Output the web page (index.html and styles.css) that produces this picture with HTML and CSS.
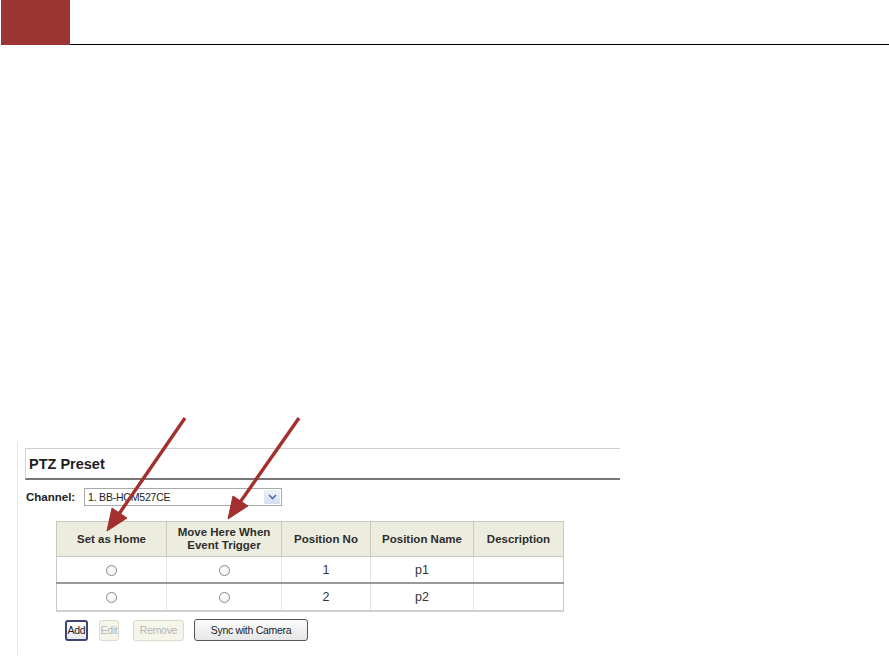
FILE: index.html
```html
<!DOCTYPE html>
<html>
<head>
<meta charset="utf-8">
<link rel="stylesheet" href="styles.css">
</head>
<body>
<div class="page">
  <div class="header">
    <div class="redbox"></div>
    <div class="rule"></div>
  </div>

  <div class="figure">
    <div class="heading">PTZ Preset</div>
    <div class="channel-row">
      <span class="channel-label">Channel:</span>
      <div class="select">
        <span class="select-text">1. BB-HCM527CE</span>
        <span class="select-btn">
          <svg width="9" height="6" viewBox="0 0 9 6"><path d="M1 1 L4.5 4.5 L8 1" fill="none" stroke="#4a6db0" stroke-width="1.6"/></svg>
        </span>
      </div>
    </div>
    <table class="presets">
      <thead>
        <tr>
          <th class="c1">Set as Home</th>
          <th class="c2">Move Here When<br>Event Trigger</th>
          <th class="c3">Position No</th>
          <th class="c4">Position Name</th>
          <th class="c5">Description</th>
        </tr>
      </thead>
      <tbody>
        <tr class="r1">
          <td><span class="radio"></span></td>
          <td><span class="radio"></span></td>
          <td>1</td>
          <td>p1</td>
          <td></td>
        </tr>
        <tr class="r2">
          <td><span class="radio"></span></td>
          <td><span class="radio"></span></td>
          <td>2</td>
          <td>p2</td>
          <td></td>
        </tr>
      </tbody>
    </table>
    <div class="buttons">
      <span class="btn btn-add">Add</span>
      <span class="btn btn-disabled btn-edit">Edit</span>
      <span class="btn btn-disabled btn-remove">Remove</span>
      <span class="btn btn-sync">Sync with Camera</span>
    </div>
  </div>

  <svg class="arrows" width="889" height="670" viewBox="0 0 889 670">
    <g fill="#a3302e" stroke="#a3302e">
      <line x1="185" y1="418" x2="119.3" y2="513.5" stroke-width="3.4"/>
      <polygon points="107,531 127,518 112,508" stroke-width="1"/>
      <line x1="299" y1="418" x2="240.5" y2="501.6" stroke-width="3.4"/>
      <polygon points="228,519 248,506 233,496" stroke-width="1"/>
    </g>
  </svg>
</div>
</body>
</html>
```

FILE: styles.css
```css
html, body {
  margin: 0;
  padding: 0;
  background: #ffffff;
}

.page {
  position: relative;
  width: 889px;
  height: 670px;
  overflow: hidden;
  font-family: "Liberation Sans", Arial, sans-serif;
}

.header {
  display: flex;
  align-items: flex-end;
  height: 45px;
}

.redbox {
  width: 69px;
  height: 45px;
  margin-left: 1px;
  background: #9b3534;
}

.rule {
  flex: 1;
  height: 0;
  border-bottom: 1.5px solid #000;
  margin-bottom: 0.5px;
}

.figure {
  margin-top: 397px;
  margin-left: 17px;
  border-left: 1px solid #e6e6e6;
  padding-top: 6px;
  padding-left: 7px;
  height: 207px;
}

.heading {
  width: 591px;
  height: 29px;
  border-top: 1px solid #cfcfcf;
  border-left: 1px solid #d4d4d4;
  border-bottom: 2px solid #777;
  padding-left: 3px;
  box-sizing: content-box;
  font-weight: bold;
  font-size: 14.5px;
  line-height: 30px;
  color: #1e1e1e;
}

.channel-row {
  display: flex;
  align-items: center;
  margin-top: 8px;
  height: 18px;
  padding-left: 1px;
}

.channel-label {
  font-weight: bold;
  font-size: 11.5px;
  color: #222;
  width: 58px;
}

.select {
  display: flex;
  align-items: center;
  width: 196px;
  height: 16px;
  border: 1px solid #a9a9a9;
  background: #fff;
}

.select-text {
  flex: 1;
  font-size: 10.5px;
  color: #222;
  padding-left: 3px;
  letter-spacing: -0.2px;
}

.select-btn {
  display: flex;
  align-items: center;
  justify-content: center;
  width: 15px;
  height: 14px;
  margin-right: 1px;
  background: linear-gradient(#eef2fa, #d6dff0);
  border-left: 1px solid #e0e6f2;
}

.presets {
  margin-top: 15px;
  margin-left: 31px;
  border-collapse: collapse;
  width: 508px;
  font-size: 12.5px;
  color: #222;
}

.presets th {
  background: #ecedde;
  border: 1px solid #c9c9bd;
  height: 34px;
  padding: 0;
  font-size: 11.5px;
  font-weight: bold;
  line-height: 13px;
  color: #2e2e2e;
  text-align: center;
}

.presets .c1 { width: 109px; }
.presets .c2 { width: 114px; }
.presets .c3 { width: 88px; }
.presets .c4 { width: 102px; }

.presets td {
  border-left: 1px solid #e2e2e2;
  border-right: 1px solid #e2e2e2;
  text-align: center;
  padding: 0;
  color: #333;
}

.presets .r1 td {
  height: 25px;
  border-bottom: 2px solid #9a9a9a;
}

.presets .r2 td {
  height: 26px;
  border-bottom: 2px solid #d0d0d0;
}

.presets td:first-child { border-left: 1px solid #c9c9c9; }
.presets td:last-child { border-right: 1px solid #c9c9c9; }

.radio {
  display: inline-block;
  width: 9px;
  height: 9px;
  border: 1px solid #8a8a8a;
  border-radius: 50%;
  background: radial-gradient(circle at 40% 40%, #fff, #eee);
  vertical-align: middle;
}

.buttons {
  display: flex;
  align-items: center;
  gap: 11px;
  margin-top: 7px;
  margin-left: 40px;
}

.btn {
  display: flex;
  align-items: center;
  justify-content: center;
  box-sizing: border-box;
  height: 21px;
  font-size: 10.5px;
  letter-spacing: -0.3px;
  border-radius: 3px;
}

.btn-add {
  width: 23px;
  border: 2px solid #3c4670;
  background: linear-gradient(#ffffff, #e8e8e8);
  color: #222;
}

.btn-disabled {
  border: 1px solid #dcdccc;
  background: #f5f5ea;
  color: #b5b5b5;
}

.btn-edit { width: 20px; }
.btn-remove { width: 51px; margin-left: 3px; }

.btn-sync {
  width: 114px;
  height: 22px;
  border: 1.5px solid #555;
  background: linear-gradient(#fbfbfb, #e6e6e6);
  color: #222;
  margin-left: -1px;
}

.arrows {
  position: absolute;
  left: 0;
  top: 0;
  pointer-events: none;
}
```
